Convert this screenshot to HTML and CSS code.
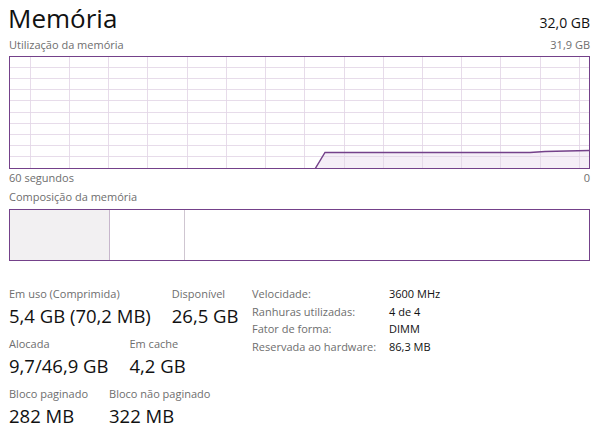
FILE: index.html
```html
<!DOCTYPE html>
<html lang="pt">
<head>
<meta charset="utf-8">
<title>Memória</title>
<link rel="stylesheet" href="styles.css">
</head>
<body>
<main class="page">
  <header class="head">
    <h1 class="title">Memória</h1>
    <span class="total">32,0 GB</span>
  </header>
  <div class="caption-row top-cap">
    <span>Utilização da memória</span>
    <span>31,9 GB</span>
  </div>
  <div class="graph">
    <svg width="579" height="111" viewBox="0 0 579 111">
      <polygon class="area" points="305,111 315,95 520,95 535,94 579,93 579,111"/>
      <g class="grid">
        <line x1="20.5" y1="0" x2="20.5" y2="111"/>
        <line x1="59.5" y1="0" x2="59.5" y2="111"/>
        <line x1="98.5" y1="0" x2="98.5" y2="111"/>
        <line x1="137.5" y1="0" x2="137.5" y2="111"/>
        <line x1="177.5" y1="0" x2="177.5" y2="111"/>
        <line x1="216.5" y1="0" x2="216.5" y2="111"/>
        <line x1="255.5" y1="0" x2="255.5" y2="111"/>
        <line x1="294.5" y1="0" x2="294.5" y2="111"/>
        <line x1="334.5" y1="0" x2="334.5" y2="111"/>
        <line x1="373.5" y1="0" x2="373.5" y2="111"/>
        <line x1="412.5" y1="0" x2="412.5" y2="111"/>
        <line x1="451.5" y1="0" x2="451.5" y2="111"/>
        <line x1="490.5" y1="0" x2="490.5" y2="111"/>
        <line x1="530.5" y1="0" x2="530.5" y2="111"/>
        <line x1="569.5" y1="0" x2="569.5" y2="111"/>
        <line x1="0" y1="10.5" x2="579" y2="10.5"/>
        <line x1="0" y1="21.5" x2="579" y2="21.5"/>
        <line x1="0" y1="32.5" x2="579" y2="32.5"/>
        <line x1="0" y1="43.5" x2="579" y2="43.5"/>
        <line x1="0" y1="55.5" x2="579" y2="55.5"/>
        <line x1="0" y1="66.5" x2="579" y2="66.5"/>
        <line x1="0" y1="77.5" x2="579" y2="77.5"/>
        <line x1="0" y1="88.5" x2="579" y2="88.5"/>
        <line x1="0" y1="99.5" x2="579" y2="99.5"/>
      </g>
      <polyline class="usage" points="305,112 315,95.5 520,95.5 535,94.5 579,93.5"/>
    </svg>
  </div>
  <div class="caption-row axis">
    <span>60 segundos</span>
    <span>0</span>
  </div>
  <div class="caption-row comp-cap">
    <span>Composição da memória</span>
  </div>
  <div class="composition">
    <div class="seg seg-used" style="width:99px"></div>
    <div class="seg seg-mod" style="width:74px"></div>
    <div class="seg seg-rest"></div>
  </div>
  <section class="stats">
    <div class="stats-left">
      <div class="stat-row">
        <div class="stat"><div class="label">Em uso (Comprimida)</div><div class="value">5,4 GB (70,2 MB)</div></div>
        <div class="stat"><div class="label">Disponível</div><div class="value">26,5 GB</div></div>
      </div>
      <div class="stat-row">
        <div class="stat"><div class="label">Alocada</div><div class="value">9,7/46,9 GB</div></div>
        <div class="stat"><div class="label">Em cache</div><div class="value">4,2 GB</div></div>
      </div>
      <div class="stat-row">
        <div class="stat"><div class="label">Bloco paginado</div><div class="value">282 MB</div></div>
        <div class="stat"><div class="label">Bloco não paginado</div><div class="value">322 MB</div></div>
      </div>
    </div>
    <dl class="props">
      <dt>Velocidade:</dt><dd>3600 MHz</dd>
      <dt>Ranhuras utilizadas:</dt><dd>4 de 4</dd>
      <dt>Fator de forma:</dt><dd>DIMM</dd>
      <dt>Reservada ao hardware:</dt><dd>86,3 MB</dd>
    </dl>
  </section>
</main>
</body>
</html>
```

FILE: styles.css
```css
html, body {
  margin: 0;
  padding: 0;
  background: #ffffff;
}

body {
  font-family: "Open Sans", "Noto Sans", "Liberation Sans", sans-serif;
  color: #000000;
}

.page {
  width: 581px;
  padding: 0 13px 0 9px;
}

.head {
  display: flex;
  justify-content: space-between;
  align-items: baseline;
  height: 36px;
}

.title {
  margin: 0 0 0 -1px;
  font-size: 26px;
  font-weight: 400;
  line-height: 36px;
  color: #111111;
}

.total {
  font-size: 14px;
  line-height: 36px;
  color: #111111;
}

.caption-row {
  display: flex;
  justify-content: space-between;
  font-size: 11px;
  color: #6e6e6e;
}

.top-cap {
  line-height: 18px;
  margin-bottom: 2px;
}

.axis {
  line-height: 18px;
}

.comp-cap {
  line-height: 20px;
  margin-bottom: 2px;
}

.graph {
  width: 579px;
  height: 111px;
  border: 1px solid #74418a;
}

.graph svg {
  display: block;
}

.area {
  fill: #f5eef7;
}

.grid line {
  stroke: #e3d7e7;
  stroke-width: 1;
  opacity: 0.85;
}

.usage {
  fill: none;
  stroke: #74418a;
  stroke-width: 1.4;
}

.composition {
  display: flex;
  width: 579px;
  height: 50px;
  border: 1px solid #74418a;
}

.seg {
  height: 100%;
}

.seg-used {
  background: #f2f0f2;
  border-right: 1px solid #c7b6cc;
}

.seg-mod {
  background: #ffffff;
  border-right: 1px solid #cfc6d1;
}

.seg-rest {
  flex: 1;
  background: #ffffff;
}

.stats {
  display: flex;
  margin-top: 25px;
}

.stats-left {
  flex: 0 0 243px;
  display: flex;
  flex-direction: column;
  gap: 6px;
}

.stat-row {
  display: flex;
  gap: 21px;
}

.label {
  font-size: 11px;
  line-height: 16px;
  color: #6e6e6e;
  white-space: nowrap;
}

.value {
  font-size: 18.5px;
  line-height: 28px;
  color: #111111;
  white-space: nowrap;
}

.props {
  display: grid;
  grid-template-columns: 137px auto;
  margin: 0;
  font-size: 11px;
  line-height: 17.5px;
  align-self: flex-start;
  margin-top: -1px;
}

.props dt {
  color: #6e6e6e;
  white-space: nowrap;
}

.props dd {
  margin: 0;
  color: #111111;
  white-space: nowrap;
}
```
